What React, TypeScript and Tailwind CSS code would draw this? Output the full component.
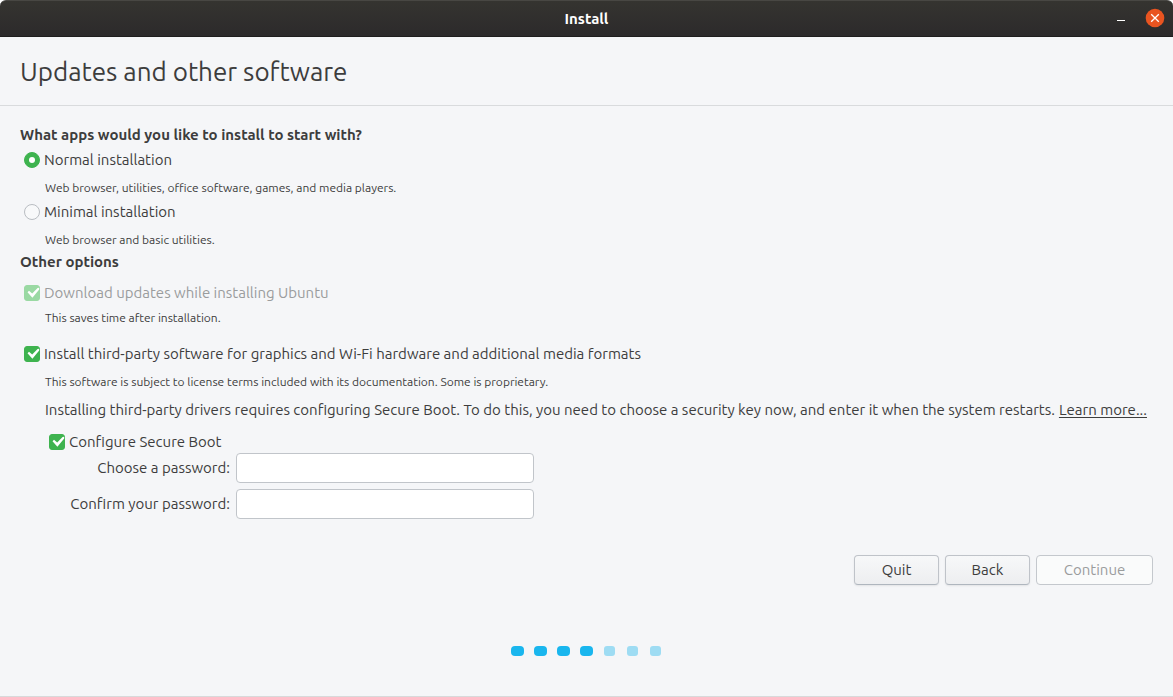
import { useState } from "react";
import type { ReactNode } from "react";

type ChoiceProps = {
  id: string;
  type: "radio" | "checkbox";
  name?: string;
  checked: boolean;
  disabled?: boolean;
  onChange: () => void;
  children: ReactNode;
};

function Choice({ id, type, name, checked, disabled, onChange, children }: ChoiceProps) {
  const isRadio = type === "radio";
  return (
    <label htmlFor={id} className={`flex min-h-6 items-center gap-1 pl-1 ${disabled ? "text-[#9a9c9d]" : ""}`}>
      <span className="grid size-4 shrink-0">
        <input
          id={id}
          type={type}
          name={name}
          checked={checked}
          disabled={disabled}
          onChange={onChange}
          className={`col-start-1 row-start-1 size-4 appearance-none border border-[#b9bdc2] bg-[#f8f9fa] checked:border-[#3eb34f] checked:bg-[#3eb34f] disabled:checked:border-[#9ad9a3] disabled:checked:bg-[#9ad9a3] ${isRadio ? "rounded-full" : "rounded-[3px]"}`}
        />
        {checked && (
          <svg viewBox="0 0 16 16" className="pointer-events-none col-start-1 row-start-1 size-4" aria-hidden="true">
            {isRadio ? (
              <circle cx="8" cy="8" r="3" fill="#fff" />
            ) : (
              <path d="M3.5 7.2 5 5.7 8.2 8.6 13.6 2.9 15.2 2.8 15.2 4.4 8.4 12.8Z" fill="#fff" />
            )}
          </svg>
        )}
      </span>
      <span>{children}</span>
    </label>
  );
}

function Hint({ children }: { children: ReactNode }) {
  return <p className="pl-[25px] text-[12px] leading-5">{children}</p>;
}

const STEPS = 7;
const CURRENT_STEP = 4;

export default function App() {
  const [mode, setMode] = useState("normal");
  const [thirdParty, setThirdParty] = useState(true);
  const [secureBoot, setSecureBoot] = useState(true);

  const fieldClass = "h-[30px] w-[298px] rounded border border-[#c1c5ca] bg-white px-2 outline-none focus:border-[#3eb34f]";
  const buttonClass =
    "h-[30px] rounded border border-[#bfc3c9] border-b-[#afb6be] bg-linear-to-b from-[#f7f8f9] to-[#edeef0] shadow-[0_1px_2px_rgba(0,0,0,0.08)]";

  return (
    <div className="bg-white font-['Ubuntu','Noto_Sans',sans-serif] text-[15px] text-[#3d3d3d]">
      <div className="flex min-h-screen flex-col border-b border-[#d8d9da] bg-[#f5f6f8] rounded-t-md">
        <header className="grid h-[37px] grid-cols-[1fr_auto_1fr] items-center rounded-t-md border-t border-b border-t-[#484743] border-b-[#1f1e1e] bg-linear-to-b from-[#353430] to-[#2c2a2b] px-2 pb-px text-white">
          <span className="col-start-2 pt-0.5 font-bold">Install</span>
          <div className="flex items-center gap-5 justify-self-end">
            <button type="button" aria-label="Minimize">
              <svg viewBox="0 0 8 20" className="block h-5 w-2" aria-hidden="true">
                <rect y="12" width="8" height="1" fill="#fff" />
              </svg>
            </button>
            <button type="button" aria-label="Close">
              <svg viewBox="0 0 20 20" className="block size-5" aria-hidden="true">
                <circle cx="10" cy="10" r="9.3" fill="#e95420" />
                <path d="m6.2 6.2 7.6 7.6m0-7.6-7.6 7.6" stroke="#fff" strokeWidth="1.3" />
              </svg>
            </button>
          </div>
        </header>

        <div className="flex h-[69px] items-center border-b border-[#d9dbdd] px-5 pt-0.5">
          <h1 className="text-[26px] leading-8">Updates and other software</h1>
        </div>

        <main className="px-5 pt-[18px]">
          <h2 className="mb-0.5 font-bold leading-[22px]">What apps would you like to install to start with?</h2>
          <Choice id="normal" type="radio" name="mode" checked={mode === "normal"} onChange={() => setMode("normal")}>
            Normal installation
          </Choice>
          <div className="pt-1.5 pb-0.5">
            <Hint>Web browser, utilities, office software, games, and media players.</Hint>
          </div>
          <Choice id="minimal" type="radio" name="mode" checked={mode === "minimal"} onChange={() => setMode("minimal")}>
            Minimal installation
          </Choice>
          <div className="pt-1.5 pb-px">
            <Hint>Web browser and basic utilities.</Hint>
          </div>

          <h2 className="mb-2 font-bold leading-[22px]">Other options</h2>
          <Choice id="updates" type="checkbox" checked disabled onChange={() => {}}>
            Download updates while installing Ubuntu
          </Choice>
          <div className="pt-[3px] pb-3.5">
            <Hint>This saves time after installation.</Hint>
          </div>
          <Choice id="third-party" type="checkbox" checked={thirdParty} onChange={() => setThirdParty(!thirdParty)}>
            Install third-party software for graphics and Wi-Fi hardware and additional media formats
          </Choice>
          <div className="py-1.5">
            <Hint>This software is subject to license terms included with its documentation. Some is proprietary.</Hint>
          </div>

          <div className="pl-[25px]">
            <div className="flex justify-between gap-1 pr-[7px] leading-6">
              <p className="lg:whitespace-nowrap">
                Installing third-party drivers requires configuring Secure Boot. To do this, you need to choose a security key now, and enter it when the system restarts.
              </p>
              <a href="#secure-boot" className="shrink-0 underline underline-offset-2">
                Learn more...
              </a>
            </div>
            <div className="-mb-px pt-2">
              <Choice id="secure-boot" type="checkbox" checked={secureBoot} onChange={() => setSecureBoot(!secureBoot)}>
                Configure Secure Boot
              </Choice>
            </div>
            <div className="grid grid-cols-[185px_auto] items-center justify-start gap-x-1.5 gap-y-1.5">
              <label htmlFor="password" className="text-right">Choose a password:</label>
              <input id="password" type="password" className={fieldClass} />
              <label htmlFor="confirm" className="text-right">Confirm your password:</label>
              <input id="confirm" type="password" className={fieldClass} />
            </div>
          </div>
        </main>

        <footer className="px-5 pt-9">
          <div className="flex justify-end gap-1.5">
            <button type="button" className={`w-[85px] ${buttonClass}`}>Quit</button>
            <button type="button" className={`w-[85px] ${buttonClass}`}>Back</button>
            <button type="button" disabled className="h-[30px] w-[117px] rounded border border-[#c4c8cd] bg-[#fafbfb] text-[#9a9c9d]">
              Continue
            </button>
          </div>
          <div className="flex justify-center gap-2.5 pt-[61px]" role="progressbar" aria-label="Installation steps" aria-valuemin={0} aria-valuemax={STEPS} aria-valuenow={CURRENT_STEP}>
            {Array.from({ length: STEPS }, (_, i) => (
              <span key={i} className="flex w-[13px] justify-center">
                <span className={i < CURRENT_STEP ? "h-2.5 w-[13px] rounded-[4px] bg-[#19b6ee]" : "h-2.5 w-[11px] rounded-[3px] bg-[#9edcf3]"} />
              </span>
            ))}
          </div>
        </footer>
      </div>
    </div>
  );
}
